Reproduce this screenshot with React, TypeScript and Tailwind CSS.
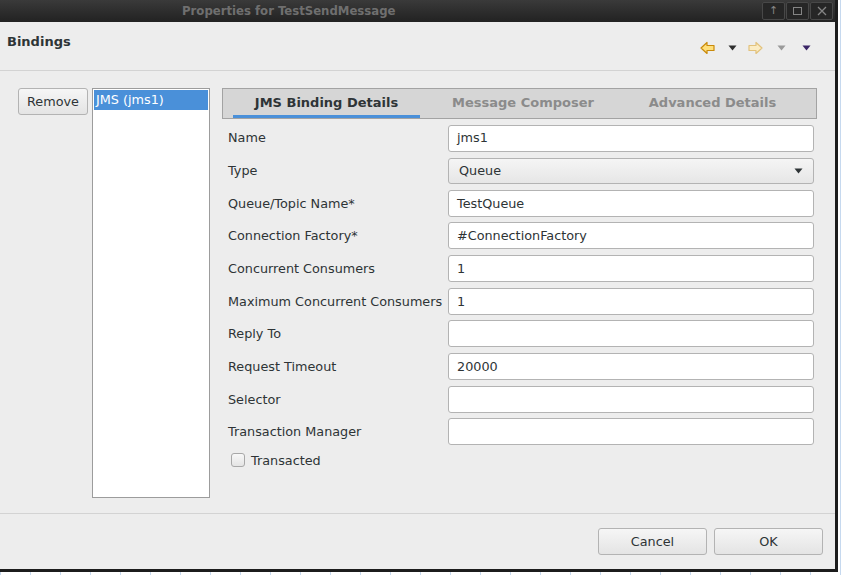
import { ReactNode } from "react";

const fields: { label: string; value: string; select?: boolean }[] = [
  { label: "Name", value: "jms1" },
  { label: "Type", value: "Queue", select: true },
  { label: "Queue/Topic Name*", value: "TestQueue" },
  { label: "Connection Factory*", value: "#ConnectionFactory" },
  { label: "Concurrent Consumers", value: "1" },
  { label: "Maximum Concurrent Consumers", value: "1" },
  { label: "Reply To", value: "" },
  { label: "Request Timeout", value: "20000" },
  { label: "Selector", value: "" },
  { label: "Transaction Manager", value: "" },
];

function Button({ children, className }: { children: ReactNode; className: string }) {
  return (
    <button
      className={
        "h-[27px] rounded-[3px] border border-[#b3b3b3] bg-gradient-to-b from-[#f6f6f6] to-[#e4e4e4] text-[12.8px] text-[#2e3436] " +
        className
      }
    >
      {children}
    </button>
  );
}

function Caret({ color }: { color: string }) {
  return (
    <svg width="9" height="6" viewBox="0 0 9 6">
      <path d="M0.5 0.5 H8.5 L4.5 5.5 Z" fill={color} />
    </svg>
  );
}

function Arrow({ dir, stroke, fill }: { dir: "left" | "right"; stroke: string; fill: string }) {
  return (
    <svg width="15" height="14" viewBox="0 0 15 14" className={dir === "right" ? "-scale-x-100" : ""}>
      <path
        d="M1 7 L7 1.5 V4.5 H14 V9.5 H7 V12.5 Z"
        fill={fill}
        stroke={stroke}
        strokeWidth="1.2"
        strokeLinejoin="round"
      />
    </svg>
  );
}

function WinButton({ children }: { children: ReactNode }) {
  return (
    <div className="w-[23px] h-[18px] rounded-[2px] border border-[#484848] bg-[#262626] flex items-center justify-center text-[#858585] text-[11px]">
      {children}
    </div>
  );
}

export default function App() {
  return (
    <div
      className="w-[842px] h-[575px] bg-white bg-[repeating-linear-gradient(90deg,#c6d9ef_0,#c6d9ef_1px,transparent_1px,transparent_30px)] overflow-hidden"
      style={{ fontFamily: '"DejaVu Sans", "Liberation Sans", sans-serif' }}
    >
      <div className="w-[838px] h-[572px] bg-[#ededed] border-r-[3px] border-b-[3px] border-[#1c1c1c] flex flex-col">
        {/* title bar */}
        <div className="h-[22px] shrink-0 bg-gradient-to-b from-[#3a3a3a] to-[#222222] flex items-center relative">
          <div
            className="ml-[182px] text-[13px] font-bold text-[#6f6f6f]"
            style={{ fontFamily: '"DejaVu Sans Condensed", "DejaVu Sans", sans-serif' }}
          >
            Properties for TestSendMessage
          </div>
          <div className="ml-auto mr-[2px] flex gap-[1px]">
            <WinButton>↑</WinButton>
            <WinButton>
              <div className="w-[9px] h-[8px] border border-[#858585]" />
            </WinButton>
            <WinButton>
              <svg width="10" height="10" viewBox="0 0 10 10">
                <path d="M1 1 L9 9 M9 1 L1 9" stroke="#858585" strokeWidth="1.3" />
              </svg>
            </WinButton>
          </div>
        </div>

        {/* header */}
        <div className="h-[49px] shrink-0 border-b border-[#d3d3d3] flex pl-[7px] pr-[24px]">
          <div className="pt-[10px] text-[13px] font-bold text-[#2e3436]">Bindings</div>
          <div className="ml-auto mt-[18px] flex items-center h-[16px]">
            <Arrow dir="left" stroke="#c98a0a" fill="#ffdf7a" />
            <div className="ml-[13px]">
              <Caret color="#2e2e2e" />
            </div>
            <div className="ml-[11px]">
              <Arrow dir="right" stroke="#e2c27c" fill="#fbecc4" />
            </div>
            <div className="ml-[14px]">
              <Caret color="#9a9a9a" />
            </div>
            <div className="ml-[16px]">
              <Caret color="#3a2566" />
            </div>
          </div>
        </div>

        {/* body */}
        <div className="flex-1 flex pt-[17px] pl-[18px] pr-[18px] border-b border-[#d3d3d3]">
          <Button className="w-[70px] shrink-0">Remove</Button>
          <div className="ml-[4px] w-[118px] h-[410px] shrink-0 bg-white border border-[#9c9c9c] p-[1px]">
            <div className="h-[20px] bg-[#4a90d9] text-white text-[12.8px] leading-[20px] pl-[2px]">JMS (jms1)</div>
          </div>
          <div className="ml-[12px] flex-1 flex flex-col">
            <div className="h-[31px] bg-[#d6d6d6] border border-[#a3a3a3] flex pl-[10px] gap-[8px] text-[13px] font-bold">
              <div className="w-[187px] flex items-center justify-center text-[#2e3436] border-b-[3px] border-[#4a90d9] pt-[2px]">
                JMS Binding Details
              </div>
              <div className="w-[190px] flex items-center justify-center text-[#8b8b8b] pb-[1px]">Message Composer</div>
              <div className="w-[173px] flex items-center justify-center text-[#8b8b8b] pb-[1px]">Advanced Details</div>
            </div>
            <div className="flex flex-col gap-[6.67px] pt-[6px] pl-[6px]">
              {fields.map((f) => (
                <div key={f.label} className="flex items-center h-[26px]">
                  <div className="w-[220px] text-[12.8px] text-[#2e3436]">{f.label}</div>
                  {f.select ? (
                    <div className="w-[366px] h-[26px] rounded-[3px] border border-[#b3b3b3] bg-gradient-to-b from-[#f5f5f5] to-[#e6e6e6] flex items-center pl-[10px] pr-[10px] text-[12.8px] text-[#2e3436]">
                      Queue
                      <div className="ml-auto">
                        <Caret color="#2e3436" />
                      </div>
                    </div>
                  ) : (
                    <div className="w-[366px] h-[27px] rounded-[3px] border border-[#b3b3b3] bg-white flex items-center pl-[8px] text-[12.8px] text-[#2e3436]">
                      {f.value}
                    </div>
                  )}
                </div>
              ))}
              <div className="flex items-center -mt-[1px] pl-[3px] gap-[6px]">
                <div className="w-[14px] h-[14px] rounded-[3px] border border-[#a8a8a8] bg-gradient-to-b from-[#f8f8f8] to-[#e4e4e4]" />
                <div className="text-[12.8px] text-[#2e3436]">Transacted</div>
              </div>
            </div>
          </div>
        </div>

        {/* footer */}
        <div className="h-[55px] shrink-0 flex justify-end items-start pt-[14px] pr-[12px] gap-[7px]">
          <Button className="w-[109px]">Cancel</Button>
          <Button className="w-[109px]">OK</Button>
        </div>
      </div>
    </div>
  );
}
